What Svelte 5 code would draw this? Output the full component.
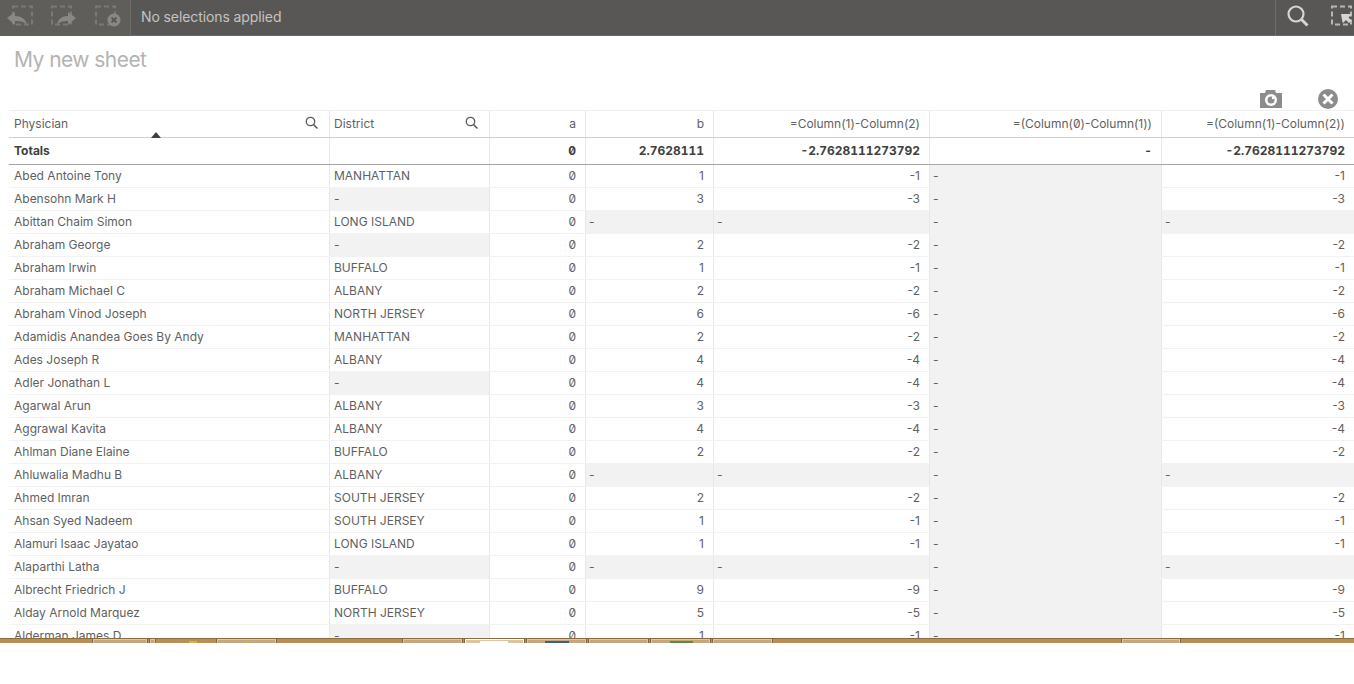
<script>
  const names = [
    ['Abed Antoine Tony','MANHATTAN','1'],['Abensohn Mark H','-','3'],['Abittan Chaim Simon','LONG ISLAND',''],
    ['Abraham George','-','2'],['Abraham Irwin','BUFFALO','1'],['Abraham Michael C','ALBANY','2'],
    ['Abraham Vinod Joseph','NORTH JERSEY','6'],['Adamidis Anandea Goes By Andy','MANHATTAN','2'],['Ades Joseph R','ALBANY','4'],
    ['Adler Jonathan L','-','4'],['Agarwal Arun','ALBANY','3'],['Aggrawal Kavita','ALBANY','4'],
    ['Ahlman Diane Elaine','BUFFALO','2'],['Ahluwalia Madhu B','ALBANY',''],['Ahmed Imran','SOUTH JERSEY','2'],
    ['Ahsan Syed Nadeem','SOUTH JERSEY','1'],['Alamuri Isaac Jayatao','LONG ISLAND','1'],['Alaparthi Latha','-',''],
    ['Albrecht Friedrich J','BUFFALO','9'],['Alday Arnold Marquez','NORTH JERSEY','5'],['Alderman James D','-','1']
  ];
  const tabs = [[93,54,0],[150,5,0],[217,59,0],[403,59,0],[465,59,1],[527,59,0],[589,59,0],[651,59,0],[713,59,0],[1122,58,0]];
  const marks = [[189,8,'#d9b23c'],[245,4,'#c9b34a'],[480,28,'#ffffff'],[545,24,'#3d5f8a'],[670,23,'#5f8a3d']];
</script>

<div class="page">
  <header class="bar">
    <div class="tools">
      <svg width="130" height="36" viewBox="0 0 130 36" fill="none">
        <g stroke="#7b7975" stroke-width="2" stroke-dasharray="5 3">
          <rect x="13" y="6.500" width="19" height="18"/>
          <rect x="52" y="6.500" width="19" height="18"/>
          <rect x="96" y="6.500" width="19" height="18"/>
        </g>
        <path d="M7 18l8-6v4c6 0 11 3 12 9-2-3-6-4-12-4v4z" fill="#8a8884"/>
        <path d="M76 18l-8-6v4c-6 0-10 3-11 9 2-3 5-4 11-4v4z" fill="#8a8884"/>
        <circle cx="114" cy="20" r="6.500" fill="#8a8884"/>
        <path d="M111.500 17.500l5 5m0-5l-5 5" stroke="#595755" stroke-width="1.800"/>
      </svg>
      <span class="status">No selections applied</span>
    </div>
    <div class="right">
      <svg width="78" height="36" viewBox="0 0 78 36" fill="none">
        <circle cx="20" cy="14" r="7.500" stroke="#d6d5d2" stroke-width="2.200"/>
        <path d="M25.500 19.500l6 6" stroke="#d6d5d2" stroke-width="3"/>
        <rect x="56" y="6.500" width="19" height="18" stroke="#b9b7b3" stroke-width="2" stroke-dasharray="5 3"/>
        <path d="M65 14h10v1l-2.500 2.500 3 3-2.500 2.500-3-3-2.500 2.500h-1z" fill="#d6d5d2"/>
      </svg>
    </div>
  </header>

  <h1>My new sheet</h1>

  <div class="actions">
    <svg width="24" height="20" viewBox="0 0 24 20">
      <path d="M1 4h5l1-3h9l1 3h6v15H1z" fill="#8c8c8c"/>
      <circle cx="12" cy="11" r="6" fill="#fff"/><circle cx="12" cy="11" r="3.500" fill="#8c8c8c"/>
      <circle cx="14" cy="9" r="1.200" fill="#fff"/>
    </svg>
    <svg width="20" height="20" viewBox="0 0 20 20">
      <circle cx="10" cy="10" r="10" fill="#8c8c8c"/>
      <path d="M5.500 5.500l9 9m0-9l-9 9" stroke="#fff" stroke-width="3"/>
    </svg>
  </div>

  <div class="table">
    <div class="row head">
      <div class="c c1">Physician
        <svg class="search" width="14" height="14" viewBox="0 0 14 14" fill="none"><circle cx="5.500" cy="5.500" r="4.200" stroke="#595959" stroke-width="1.300"/><path d="M8.500 8.500l4 4" stroke="#595959" stroke-width="1.600"/></svg>
        <span class="sort"></span>
      </div>
      <div class="c c2">District
        <svg class="search" width="14" height="14" viewBox="0 0 14 14" fill="none"><circle cx="5.500" cy="5.500" r="4.200" stroke="#595959" stroke-width="1.300"/><path d="M8.500 8.500l4 4" stroke="#595959" stroke-width="1.600"/></svg>
      </div>
      <div class="c c3 r">a</div>
      <div class="c c4 r">b</div>
      <div class="c c5 r">=Column(1)-Column(2)</div>
      <div class="c c6 r">=(Column(0)-Column(1))</div>
      <div class="c c7 r">=(Column(1)-Column(2))</div>
    </div>
    <div class="row totals">
      <div class="c c1">Totals</div>
      <div class="c c2"></div>
      <div class="c c3 r">0</div>
      <div class="c c4 r">2.7628111</div>
      <div class="c c5 r">-2.7628111273792</div>
      <div class="c c6 r">-</div>
      <div class="c c7 r">-2.7628111273792</div>
    </div>
    {#each names as [n, d, b]}
      <div class="row body">
        <div class="c c1">{n}</div>
        <div class="c c2" class:nil={d === '-'}>{d}</div>
        <div class="c c3 r">0</div>
        {#if b}
          <div class="c c4 r">{b}</div>
          <div class="c c5 r">-{b}</div>
        {:else}
          <div class="c c4 nil">-</div>
          <div class="c c5 nil">-</div>
        {/if}
        <div class="c c6 nil">-</div>
        {#if b}
          <div class="c c7 r">-{b}</div>
        {:else}
          <div class="c c7 nil">-</div>
        {/if}
      </div>
    {/each}
  </div>

  <div class="strip">
    {#each tabs as [x, w, sel]}
      <span class="tab" class:sel style="left:{x}px;width:{w}px"></span>
    {/each}
    {#each marks as [x, w, color]}
      <span class="mark" style="left:{x}px;width:{w}px;background:{color}"></span>
    {/each}
  </div>
</div>

<style>
  :global(body) { margin: 0; background: #fff; }
  .page {
    width: 1354px; height: 684px; overflow: hidden;
    font-family: Inter, "Open Sans", sans-serif;
    font-feature-settings: "zero";
    color: #5f5f5f;
  }
  .bar {
    height: 36px; background: #595755;
    display: flex; justify-content: space-between;
    box-shadow: inset 0 -1px 0 #6b6966;
  }
  .tools { display: flex; align-items: flex-start; }
  .tools svg { border-right: 1px solid #6f6d6a; background: #605e5b; }
  .status { padding-left: 10px; font-size: 14px; line-height: 34px; color: #c4c3c1; letter-spacing: -.1px; font-feature-settings: normal; }
  .right { border-left: 1px solid #6f6d6a; }
  .right svg { display: block; }
  h1 {
    margin: 0; padding: 11px 0 0 14px; box-sizing: border-box; height: 44px;
    font-size: 21px; line-height: 26px; font-weight: 400; color: #b3b3b3; letter-spacing: -.55px;
  }
  .actions {
    height: 30px; padding: 9px 16px 0 0; box-sizing: border-box;
    display: flex; justify-content: flex-end; align-items: flex-start; gap: 35px;
  }
  .table { margin-left: 9px; height: 527px; overflow: hidden; border-top: 1px solid #f0f0f0; font-size: 12px; }
  .row { display: flex; height: 23px; box-sizing: border-box; border-bottom: 1px solid #f2f2f2; }
  .head { height: 27px; border-bottom: 1px solid #cfcfcf; }
  .totals { height: 27px; border-bottom: 1px solid #a6a6a6; font-weight: 700; color: #404040; font-feature-settings: "zero", "tnum"; }
  .c {
    position: relative; box-sizing: border-box; padding: 0 9px 2px 5px;
    display: flex; align-items: center; white-space: nowrap;
    border-right: 1px solid #e8e8e8;
  }
  .r { justify-content: flex-end; }
  .c1 { width: 321px; }
  .c2 { width: 160px; padding-left: 4px; }
  .c3 { width: 96px; }
  .c4 { width: 128px; }
  .c5 { width: 216px; }
  .c6 { width: 232px; }
  .c7 { width: 192px; border-right: 0; }
  .c4.nil, .c5.nil, .c6.nil, .c7.nil { padding-left: 3px; }
  .nil { background: #f2f2f2; }
  .search { position: absolute; right: 10px; top: 5px; }
  .sort {
    position: absolute; left: 142px; bottom: -1px; width: 0; height: 0;
    border: 5px solid transparent; border-top: 0; border-bottom: 6px solid #404040;
  }
  .strip { position: relative; height: 5px; background: #b98f55; box-shadow: inset 0 1px 0 #8a6c44; }
  .tab {
    position: absolute; top: 1px; height: 4px; box-sizing: border-box;
    background: #c6a67c; border: 1px solid #dac6a8; border-bottom: 0;
    box-shadow: -1px 0 0 #7d6540, 1px 0 0 #7d6540;
  }
  .tab.sel { background: #d9c5a5; border-color: #fff; }
  .mark { position: absolute; top: 3px; height: 2px; }
</style>
